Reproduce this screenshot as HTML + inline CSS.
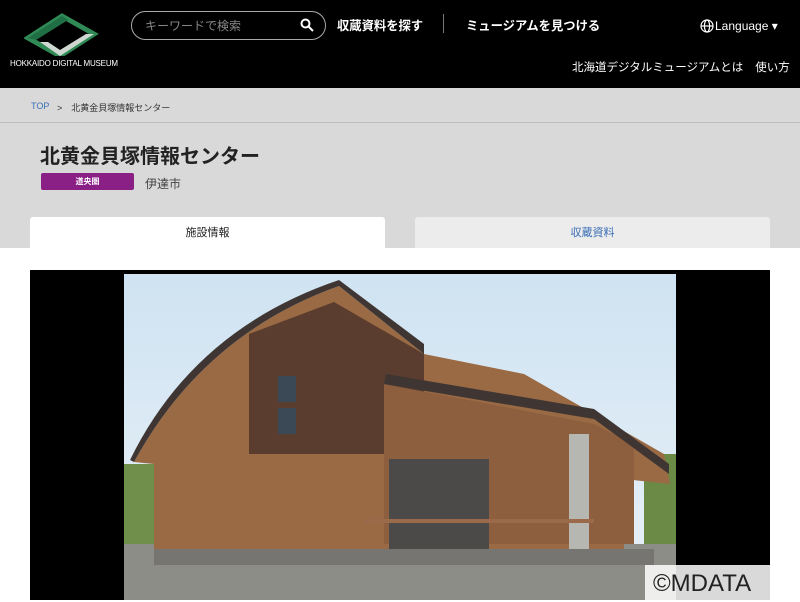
<!DOCTYPE html>
<html><head><meta charset="utf-8"><style>
*{margin:0;padding:0;box-sizing:border-box}
body{width:800px;height:600px;overflow:hidden;background:#fff;font-family:"Liberation Sans","Noto Sans CJK JP",sans-serif;position:relative}
.hdr{position:absolute;left:0;top:0;width:800px;height:88px;background:#000;color:#fff}
.abs{position:absolute}
</style></head><body>
<div class="hdr">
 <svg class="abs" style="left:24px;top:12px" width="76" height="44" viewBox="0 0 76 44">
  <polygon points="4,26 38,4 70,22 36,44" fill="none" stroke="#2f8a55" stroke-width="5"/>
  <polygon points="16,30 36,44 70,22 62,22 36,38 24,30" fill="#cfd8d0"/>
  <polygon points="4,26 38,4 44,8 12,28" fill="#1f6e44"/>
 </svg>
 <div class="abs" style="left:10px;top:59px;font-size:8px;letter-spacing:-0.2px;white-space:nowrap">HOKKAIDO DIGITAL MUSEUM</div>
 <div class="abs" style="left:131px;top:11px;width:195px;height:29px;border:1px solid #aaa;border-radius:15px"></div>
 <div class="abs" style="left:145px;top:17px;font-size:12px;color:#888">キーワードで検索</div>
 <svg class="abs" style="left:300px;top:18px" width="14" height="14" viewBox="0 0 14 14"><circle cx="5.5" cy="5.5" r="4" stroke="#fff" stroke-width="2" fill="none"/><line x1="8.5" y1="8.5" x2="13" y2="13" stroke="#fff" stroke-width="2"/></svg>
 <div class="abs" style="left:337px;top:16px;font-size:12.3px;font-weight:bold">収蔵資料を探す</div>
 <div class="abs" style="left:443px;top:14px;width:1px;height:19px;background:#777"></div>
 <div class="abs" style="left:466px;top:16px;font-size:12.3px;font-weight:bold">ミュージアムを見つける</div>
 <svg class="abs" style="left:700px;top:19px" width="14" height="14" viewBox="0 0 14 14" fill="none" stroke="#fff" stroke-width="1.2"><circle cx="7" cy="7" r="6"/><ellipse cx="7" cy="7" rx="2.6" ry="6"/><line x1="1" y1="7" x2="13" y2="7"/></svg>
 <div class="abs" style="left:715px;top:19px;font-size:12px">Language ▾</div>
 <div class="abs" style="left:572px;top:59px;font-size:11.5px;white-space:nowrap">北海道デジタルミュージアムとは<span style="margin-left:12px">使い方</span></div>
</div>
<div class="abs" style="left:0;top:88px;width:800px;height:160px;background:#d9d9d9"></div>
<div class="abs" style="left:0;top:122px;width:800px;height:1px;background:#bdbdbd"></div>
<div class="abs" style="left:31px;top:101px;font-size:9px;color:#3b6fb6">TOP</div>
<div class="abs" style="left:57px;top:101px;font-size:9px;color:#333">&gt;　北黄金貝塚情報センター</div>
<div class="abs" style="left:40px;top:140px;font-size:20px;font-weight:bold;color:#222">北黄金貝塚情報センター</div>
<div class="abs" style="left:41px;top:173px;width:93px;height:17px;background:#8a1f86;border-radius:2px;color:#fff;font-size:8px;font-weight:bold;text-align:center;line-height:17px">道央圏</div>
<div class="abs" style="left:145px;top:175px;font-size:12px;color:#444">伊達市</div>
<div class="abs" style="left:30px;top:217px;width:355px;height:32px;background:#fff;border-radius:3px 3px 0 0;text-align:center;font-size:11px;line-height:32px;color:#222">施設情報</div>
<div class="abs" style="left:415px;top:217px;width:355px;height:31px;background:#ececec;border-radius:3px 3px 0 0;text-align:center;font-size:11px;line-height:32px;color:#3b6fb6">収蔵資料</div>
<div class="abs" style="left:30px;top:270px;width:740px;height:330px;background:#000"></div>
<svg class="abs" style="left:124px;top:274px" width="552" height="326" viewBox="0 0 552 326">
 <defs><linearGradient id="sky" x1="0" y1="0" x2="0" y2="1"><stop offset="0" stop-color="#cfe3f2"/><stop offset="1" stop-color="#e9f1f7"/></linearGradient></defs>
 <rect width="552" height="326" fill="url(#sky)"/>
 <rect x="0" y="190" width="40" height="100" fill="#6f8f4a"/>
 <rect x="520" y="180" width="32" height="100" fill="#6a8a45"/>
 <rect x="0" y="270" width="552" height="56" fill="#8d8d88"/>
 <path d="M10,188 Q80,60 215,12 L300,80 L400,100 L540,180 L546,210 L500,205 L500,290 L30,290 L30,190 Z" fill="#9a6a44"/>
 <path d="M125,60 L210,28 L300,80 L300,180 L125,180 Z" fill="#5a3d2e"/>
 <path d="M260,110 L470,150 L510,170 L510,270 L260,270 Z" fill="#8e5f3e"/>
 <rect x="265" y="185" width="100" height="90" fill="#4c4a48"/>
 <rect x="445" y="160" width="20" height="120" fill="#b7b7b2"/>
 <path d="M10,188 Q80,60 215,12 L300,80 L300,70 L215,6 Q70,55 6,186 Z" fill="#3f3633"/>
 <path d="M260,110 L470,145 L545,200 L545,190 L470,135 L262,100 Z" fill="#3f3633"/>
 <rect x="154" y="102" width="18" height="26" fill="#3b4855"/>
 <rect x="154" y="134" width="18" height="26" fill="#3b4855"/>
 <rect x="30" y="275" width="500" height="16" fill="#767571"/>
 <rect x="240" y="245" width="230" height="4" fill="#9b6a4a"/>
</svg>
<div class="abs" style="left:645px;right:0;top:565px;height:35px;background:rgba(255,255,255,0.85);font-size:24px;color:#222;line-height:37px;padding-left:8px;white-space:nowrap">©MDATA</div>
</body></html>
